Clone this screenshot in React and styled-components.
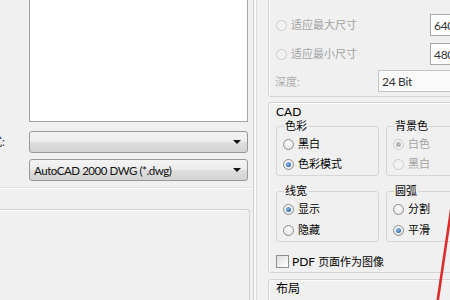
import styled, { createGlobalStyle } from "styled-components";

const GlobalStyle = createGlobalStyle`
  html, body { margin: 0; padding: 0; background: #f0f0f0; }
`;

const latin = `"Lato", "Noto Sans CJK SC", sans-serif`;

const Root = styled.div`
  position: relative;
  width: 450px;
  height: 300px;
  overflow: hidden;
  display: flex;
  background: #f0f0f0;
  font-family: "Lato", "Noto Sans CJK SC", sans-serif;
  font-size: 11px;
  color: #000;
`;

const LeftPanel = styled.div`
  width: 253px;
  flex: none;
  display: flex;
  flex-direction: column;
`;

const ListBox = styled.div`
  margin-left: 29px;
  width: 219px;
  height: 122px;
  box-sizing: border-box;
  background: #fff;
  border: 1px solid #a3a3a3;
  border-top: none;
`;

const FieldRow = styled.div`
  display: flex;
  align-items: center;
  margin-top: ${({ $gap }) => $gap}px;
`;

const FieldLabel = styled.div`
  width: 29px;
  flex: none;
  overflow: hidden;
  white-space: nowrap;
  font-size: 11px;
  line-height: 14px;
  text-indent: -9px;
  color: #222;
`;

const Combo = styled.div`
  width: 219px;
  height: 22px;
  box-sizing: border-box;
  border: 1px solid #989898;
  border-radius: 3px;
  background: linear-gradient(#f4f4f4, #ececec 48%, #dedede 52%, #d3d3d3);
  display: flex;
  align-items: center;
  justify-content: space-between;
  padding: 0 6px 0 4px;
  font-family: ${latin};
  font-size: 11.5px;
  letter-spacing: -0.45px;
  color: #111;
`;

const Arrow = styled.span`
  width: 0;
  height: 0;
  border-left: 4px solid transparent;
  border-right: 4px solid transparent;
  border-top: 4px solid #111;
  margin-left: auto;
`;

const Divider = styled.div`
  margin-top: 6px;
  height: 1px;
  background: #e2e2e2;
  border-bottom: 1px solid #fafafa;
`;

const LowerGroup = styled.div`
  margin-top: 20px;
  margin-left: -3px;
  width: 253px;
  flex: 1;
  box-sizing: border-box;
  border: 1px solid #cfcfcf;
  border-bottom: none;
  border-radius: 3px 3px 0 0;
  box-shadow: inset 1px 1px 0 #fbfbfb;
`;

const RightPanel = styled.div`
  flex: 1;
  display: flex;
  flex-direction: column;
  border-left: 1px solid #cdcdcd;
  box-shadow: inset 2px 0 0 #fafafa, inset 3px 0 0 #dedede;
  padding-left: 14px;
`;

const Section = styled.div`
  width: 240px;
  box-sizing: border-box;
  border: 1px solid #d3d3d3;
  border-radius: 3px;
  box-shadow: inset 1px 1px 0 #fbfbfb;
  margin-top: ${({ $top }) => $top}px;
  padding: ${({ $pad }) => $pad};
  display: flex;
  flex-direction: column;
`;

const OptRow = styled.div`
  display: flex;
  align-items: center;
  height: 22px;
  margin-top: ${({ $gap }) => $gap || 0}px;
`;

const RadioLabel = styled.label`
  display: flex;
  align-items: center;
  gap: 4px;
  width: ${({ $w }) => ($w ? `${$w}px` : "auto")};
  flex: none;
  height: 16px;
  color: ${({ $disabled }) => ($disabled ? "#a2a2a2" : "#000")};
  font-size: 11px;
  line-height: 16px;
`;

const Radio = styled.span`
  position: relative;
  width: 11px;
  height: 11px;
  flex: none;
  box-sizing: border-box;
  border-radius: 50%;
  border: 1px solid ${({ $disabled }) => ($disabled ? "#cbcbcb" : "#8c8c8c")};
  background: ${({ $disabled }) =>
    $disabled ? "#f2f2f2" : "radial-gradient(circle at 50% 30%, #ffffff, #dedede)"};

  &::after {
    content: "";
    display: ${({ $checked }) => ($checked ? "block" : "none")};
    position: absolute;
    inset: 2px;
    border-radius: 50%;
    background: ${({ $disabled }) =>
      $disabled ? "#b4b4b4" : "radial-gradient(circle at 40% 35%, #86b9ec, #1b4f93)"};
  }
`;

const TextBox = styled.div`
  height: 22px;
  width: ${({ $w }) => $w}px;
  flex: none;
  box-sizing: border-box;
  border: 1px solid ${({ $soft }) => ($soft ? "#c4c4c4" : "#a8a8a8")};
  background: ${({ $soft }) => ($soft ? "#fafafa" : "#fff")};
  display: flex;
  align-items: center;
  padding-left: 3px;
  font-family: ${latin};
  font-size: 12px;
  letter-spacing: -0.3px;
  color: #333;
`;

const DepthLabel = styled.span`
  width: 109px;
  flex: none;
  margin-left: -7px;
  padding-left: 6px;
  box-sizing: border-box;
  color: #ababab;
  font-size: 11px;
`;

const SectionTitle = styled.div`
  font-family: ${latin};
  font-size: 12px;
  line-height: 15px;
  margin-left: 7px;
`;

const GroupGrid = styled.div`
  display: grid;
  grid-template-columns: 103px 1fr;
  column-gap: 7px;
  row-gap: 8px;
  margin: 0 0 0 7px;
`;

const Group = styled.fieldset`
  margin: 0;
  padding: 3px 0 3px 6px;
  border: 1px solid #d6d6d6;
  border-radius: 3px;
  min-width: 0;
  display: flex;
  flex-direction: column;
  gap: ${({ $gap }) => $gap}px;
`;

const Legend = styled.legend`
  padding: 0 1px;
  margin-left: 1px;
  font-size: 11px;
  line-height: 14px;
  color: #000;
`;

const CheckRow = styled.label`
  display: flex;
  align-items: center;
  gap: 3px;
  margin: ${({ $m }) => $m};
  height: 16px;
  font-size: 11px;
`;

const PdfText = styled.span`
  font-family: ${latin};
  font-size: 12px;
`;

const Check = styled.span`
  width: 13px;
  height: 13px;
  flex: none;
  box-sizing: border-box;
  border: 1px solid #8e8e8e;
  background: linear-gradient(135deg, #dcdcdc, #f6f6f6 70%, #ffffff);
`;

const Overlay = styled.svg`
  position: absolute;
  top: 0;
  left: 0;
  pointer-events: none;
`;

function Opt({ label, checked, disabled, w }) {
  return (
    <RadioLabel $disabled={disabled} $w={w}>
      <Radio $checked={checked} $disabled={disabled} />
      {label}
    </RadioLabel>
  );
}

export default function App() {
  return (
    <Root>
      <GlobalStyle />
      <LeftPanel>
        <ListBox />
        <FieldRow $gap={9}>
          <FieldLabel>式:</FieldLabel>
          <Combo>
            <Arrow />
          </Combo>
        </FieldRow>
        <FieldRow $gap={6}>
          <FieldLabel />
          <Combo>
            AutoCAD 2000 DWG (*.dwg)
            <Arrow />
          </Combo>
        </FieldRow>
        <Divider />
        <LowerGroup />
      </LeftPanel>

      <RightPanel>
        <Section $top={-10} $pad="23px 0 4px 7px">
          <OptRow>
            <Opt label="适应最大尺寸" disabled w={154} />
            <TextBox $w={60}>640</TextBox>
          </OptRow>
          <OptRow $gap={7}>
            <Opt label="适应最小尺寸" disabled w={154} />
            <TextBox $w={60}>480</TextBox>
          </OptRow>
          <OptRow $gap={5}>
            <DepthLabel>深度:</DepthLabel>
            <TextBox $w={120} $soft>
              24 Bit
            </TextBox>
          </OptRow>
        </Section>

        <Section $top={5} $pad="1px 0 3px 0">
          <SectionTitle>CAD</SectionTitle>
          <GroupGrid>
            <Group $gap={4}>
              <Legend>色彩</Legend>
              <Opt label="黑白" />
              <Opt label="色彩模式" checked />
            </Group>
            <Group $gap={4}>
              <Legend>背景色</Legend>
              <Opt label="白色" checked disabled />
              <Opt label="黑白" disabled />
            </Group>
            <Group $gap={5}>
              <Legend>线宽</Legend>
              <Opt label="显示" checked />
              <Opt label="隐藏" />
            </Group>
            <Group $gap={5}>
              <Legend>圆弧</Legend>
              <Opt label="分割" />
              <Opt label="平滑" checked />
            </Group>
          </GroupGrid>
          <CheckRow $m="11px 0 0 7px">
            <Check />
            <PdfText>PDF</PdfText> 页面作为图像
          </CheckRow>
        </Section>

        <Section $top={6} $pad="1px 0 0 0">
          <SectionTitle>布局</SectionTitle>
          <CheckRow $m="3px 0 0 7px">
            <Check />
            布局到文件
          </CheckRow>
        </Section>
      </RightPanel>

      <Overlay width="450" height="300" viewBox="0 0 450 300">
        <line x1="454" y1="190" x2="437.5" y2="302" stroke="#dc2b2b" strokeWidth="2.6" />
      </Overlay>
    </Root>
  );
}
